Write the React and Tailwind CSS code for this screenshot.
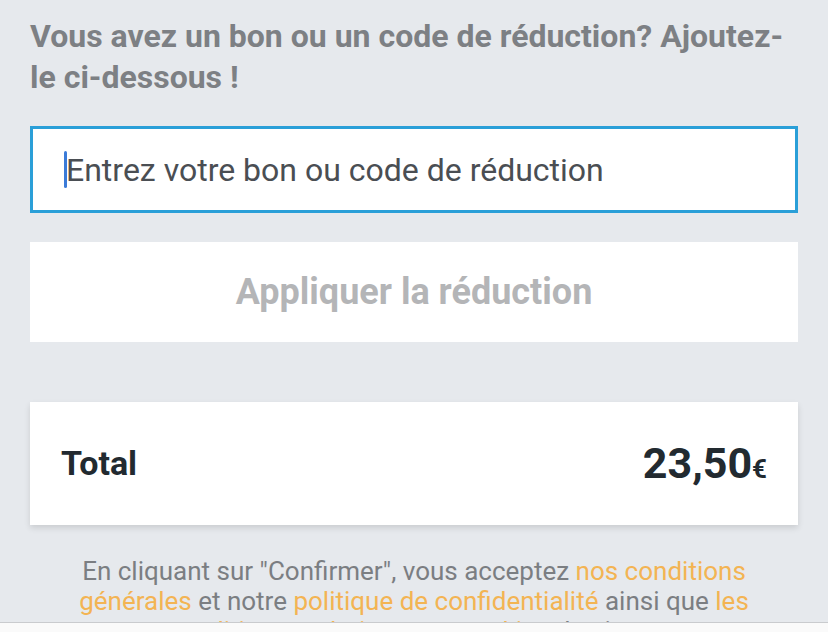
export default function App() {
  return (
    <div
      className="w-[828px] h-[632px] bg-[#e6e9ed] flex flex-col overflow-hidden"
      style={{ fontFamily: "Roboto, 'Noto Sans', sans-serif" }}
    >
      <div className="flex-1 overflow-hidden px-[30px] pt-[16px]">
        <h2 className="text-[32px] leading-[41px] font-bold text-[#7d8084]">
          Vous avez un bon ou un code de réduction? Ajoutez-le ci-dessous !
        </h2>
        <div className="mt-[28px] h-[87px] border-[3px] border-[#2a9fd8] bg-white flex items-center pl-[31px]">
          <span className="w-[3px] h-[37px] bg-[#3b7bd8] rounded-sm"></span>
          <span className="text-[32px] text-[#4a4e53] -ml-[1px]">
            Entrez votre bon ou code de réduction
          </span>
        </div>
        <div className="mt-[29px] h-[100px] bg-white flex items-center justify-center">
          <span className="text-[36px] font-bold text-[#b4b5b7]">
            Appliquer la réduction
          </span>
        </div>
        <div className="mt-[60px] h-[123px] bg-white shadow-[0_3px_6px_rgba(0,0,0,0.12)] flex items-center justify-between pl-[31px] pr-[31px]">
          <span className="text-[34px] font-bold text-[#222a30]">Total</span>
          <span className="font-bold text-[#222a30] flex items-baseline">
            <span className="text-[43px]">23,50</span>
            <span className="text-[26px]">€</span>
          </span>
        </div>
        <p className="mt-[31px] px-[20px] text-center text-[26px] leading-[30px] text-[#7b7e82]">
          En cliquant sur "Confirmer", vous acceptez{" "}
          <span className="text-[#f3b453]">nos conditions générales</span> et notre{" "}
          <span className="text-[#f3b453]">politique de confidentialité</span> ainsi que{" "}
          <span className="text-[#f3b453]">les politiques relatives aux cookies</span> du site.
        </p>
      </div>
      <div className="h-[10px] shrink-0 bg-[#fafafa] border-t border-[#c9cbce]"></div>
    </div>
  );
}
